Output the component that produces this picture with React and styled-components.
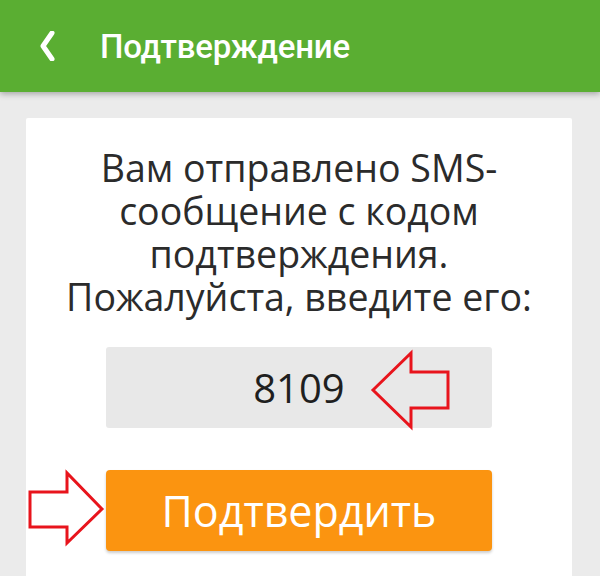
import React from 'react';
import styled, { createGlobalStyle } from 'styled-components';

const Global = createGlobalStyle`
  html, body {
    margin: 0;
    padding: 0;
    background: #ebebeb;
    overflow: hidden;
  }
  body {
    width: 600px;
    height: 576px;
  }
`;

const Screen = styled.div`
  display: flex;
  flex-direction: column;
  width: 600px;
  height: 576px;
  background: #ebebeb;
`;

const Toolbar = styled.header`
  display: flex;
  align-items: center;
  height: 92px;
  padding-left: 38px;
  background: #5aae32;
  box-shadow: 0 2px 6px rgba(0, 0, 0, 0.3);
  position: relative;
  z-index: 1;
`;

const Back = styled.svg`
  width: 18px;
  height: 30px;
  margin-right: 44px;
`;

const Title = styled.h1`
  margin: 0;
  font-family: Roboto, "Noto Sans", sans-serif;
  font-weight: 500;
  font-size: 33px;
  letter-spacing: -0.2px;
  color: #fff;
`;

const Body = styled.main`
  flex: 1;
  padding: 26px 28px 0 26px;
`;

const Card = styled.section`
  height: 100%;
  background: #fff;
  border-radius: 2px 2px 0 0;
  display: flex;
  flex-direction: column;
  align-items: center;
  padding-top: 28px;
  box-sizing: border-box;
`;

const Message = styled.p`
  margin: 0;
  font-family: "Open Sans", "Noto Sans", sans-serif;
  font-size: 37.5px;
  line-height: 43px;
  color: #2b2b2b;
  text-align: center;
`;

const Field = styled.div`
  position: relative;
  width: 386px;
  height: 81px;
  margin-top: 29px;
  background: #e8e8e8;
  border-radius: 3px;
  display: flex;
  align-items: center;
  justify-content: center;
  font-family: "Open Sans", "Noto Sans", sans-serif;
  font-size: 40px;
  color: #1f1f1f;
`;

const Button = styled.button`
  position: relative;
  width: 386px;
  height: 81px;
  margin-top: 42px;
  padding: 0;
  border: none;
  border-radius: 4px;
  background: #fb9410;
  box-shadow: 0 2px 3px rgba(0, 0, 0, 0.2);
  font-family: "Open Sans", "Noto Sans", sans-serif;
  font-size: 43px;
  color: #fff;
`;

const Arrow = styled.svg`
  position: absolute;
  top: 0;
  left: ${p => p.$left}px;
  width: 90px;
  height: 90px;
  overflow: visible;
`;

export default function App() {
  return (
    <Screen>
      <Global />
      <Toolbar>
        <Back viewBox="0 0 18 30">
          <path d="M14 2 L5 15 L14 28" fill="none" stroke="#fff" strokeWidth="5" strokeLinecap="round" strokeLinejoin="round" />
        </Back>
        <Title>Подтверждение</Title>
      </Toolbar>
      <Body>
        <Card>
          <Message>
            Вам отправлено SMS-<br />
            сообщение с кодом<br />
            подтверждения.<br />
            Пожалуйста, введите его:
          </Message>
          <Field>
            8109
            <Arrow $left={260} viewBox="0 0 90 90">
              <path d="M7 43 L45 6 L45 25 L82 25 L82 61 L45 61 L45 80 Z" fill="none" stroke="#e8141c" strokeWidth="3" strokeLinejoin="miter" />
            </Arrow>
          </Field>
          <Button>
            Подтвердить
            <Arrow $left={-80} viewBox="0 0 90 90">
              <path d="M76 39 L41 3 L41 22 L4 22 L4 57 L41 57 L41 73 Z" fill="none" stroke="#e8141c" strokeWidth="3" strokeLinejoin="miter" />
            </Arrow>
          </Button>
        </Card>
      </Body>
    </Screen>
  );
}
